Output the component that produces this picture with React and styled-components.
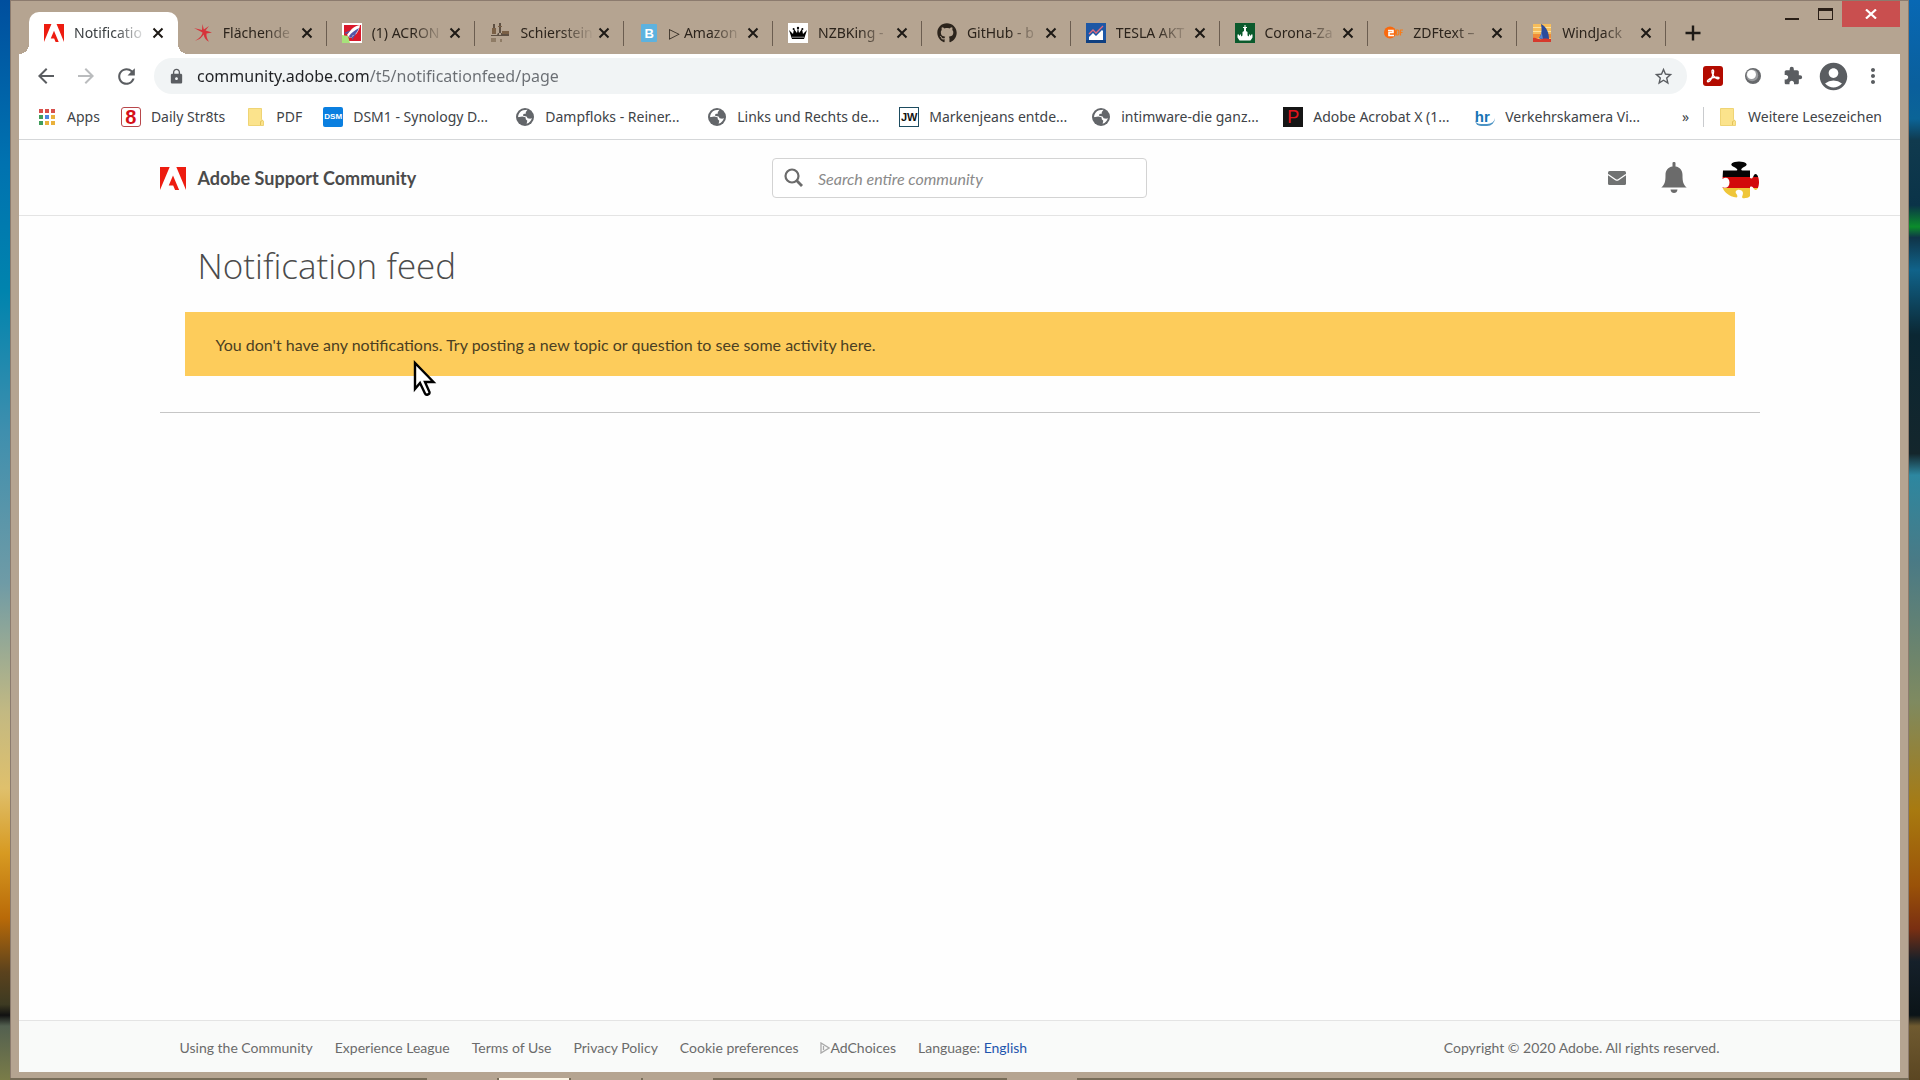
import styled, { createGlobalStyle } from "styled-components";
import { FaGithub } from "react-icons/fa";
import {
  MdAccountCircle,
  MdArrowBack,
  MdArrowForward,
  MdExtension,
  MdLock,
  MdMoreVert,
  MdRefresh,
  MdStarBorder,
} from "react-icons/md";

const GlobalStyle = createGlobalStyle`
  * {
    box-sizing: border-box;
  }
  body {
    margin: 0;
    font-family: "Noto Sans", "Open Sans", sans-serif;
  }
  button {
    padding: 0;
    border: none;
    background: none;
    font: inherit;
    color: inherit;
    cursor: pointer;
  }
  a {
    color: inherit;
    text-decoration: none;
  }
  svg {
    display: block;
    flex-shrink: 0;
  }
`;

/* ---------- desktop and window ---------- */

const Desktop = styled.div`
  display: flex;
  flex-direction: column;
  min-height: 100vh;
  padding: 0 11px 0 10px;
  background:
    linear-gradient(
        #004f9e 0%, #0072b0 15%, #0084ae 27%, #3f8fae 40%, #6f9ba6 54%,
        #c3b982 66%, #dfc06c 73%, #d79a22 79%, #b96a08 85%, #5b421d 90%,
        #3d3a22 93%, #111 94%, #536050 95%, #7a7c48 100%
      ) left / 50% 100% no-repeat,
    linear-gradient(
        #0868b4 0%, #0a5f9c 8%, #0b6497 11%, #103a4e 13%, #0a3348 19%,
        #0b8d2b 21%, #0f3448 22%, #10638a 25%, #0b2733 31%, #14262c 42%,
        #2d87a0 44%, #4a7a85 52%, #7f8a60 65%, #a87a10 75%, #9a5208 82%,
        #7a2f12 86%, #15202a 89%, #0b1418 94%, #6f5a30 95%, #5b4622 100%
      ) right / 50% 100% no-repeat;
`;

const Window = styled.div`
  display: flex;
  flex: 1;
  flex-direction: column;
  padding: 0 8px 6px;
  border: 1px solid #8c7b6e;
  border-width: 1px 1px 0;
  background: #b5a491;
`;

const Taskbar = styled.div`
  display: flex;
  gap: 2px;
  height: 2px;
  padding-left: 417px;
  background: #776c58;
`;

const TaskButton = styled.span`
  width: 70px;
  margin-left: ${(props) => props.$push || 0}px;
  background: ${(props) => props.$color || "#b5a491"};
`;

/* ---------- tab strip ---------- */

const TabStrip = styled.div`
  display: flex;
  height: 53px;
  padding-left: 10px;
`;

const TabList = styled.div`
  display: flex;
  flex: 1;
  align-items: flex-end;
  min-width: 0;
`;

const TabItem = styled.div`
  position: relative;
  display: flex;
  flex: 1 1 0;
  align-items: center;
  gap: 10px;
  min-width: 0;
  height: 42px;
  padding: 0 14px 0 15px;
  color: #2c241c;
  font-size: 14px;

  &::after {
    content: "";
    position: absolute;
    right: 0;
    top: 9px;
    width: 1px;
    height: 25px;
    background: #6b5d50;
  }
`;

const ActiveTab = styled(TabItem)`
  border-radius: 10px 10px 0 0;
  background: #fff;
  color: #3c4043;

  &::before,
  &::after {
    content: "";
    position: absolute;
    top: auto;
    bottom: 0;
    width: 10px;
    height: 10px;
  }
  &::before {
    left: -10px;
    background: radial-gradient(circle at 0 0, transparent 10px, #fff 10px);
  }
  &::after {
    right: -10px;
    background: radial-gradient(circle at 100% 0, transparent 10px, #fff 10px);
  }
`;

const TabTitle = styled.a`
  flex: 1;
  margin-right: -6px;
  overflow: hidden;
  line-height: 20px;
  white-space: nowrap;
  mask-image: linear-gradient(90deg, #000 55%, transparent);
`;

const TabClose = styled.button`
  color: #1e1a16;
`;

const NewTab = styled.button`
  align-self: flex-end;
  width: 56px;
  height: 42px;
  padding-left: 18px;
  color: #1e1a16;
`;

const WindowControls = styled.div`
  display: flex;
  align-items: flex-start;
  margin-left: 54px;
`;

const WindowButton = styled.button`
  display: flex;
  align-items: center;
  justify-content: center;
  width: 33px;
  height: 26px;
  color: #2a1f17;
`;

const CloseWindow = styled(WindowButton)`
  width: 58px;
  background: #c94f4f;
  color: #fff;
`;

/* ---------- toolbar ---------- */

const Toolbar = styled.div`
  display: flex;
  align-items: center;
  height: 44px;
  padding: 0 7px;
  background: #fff;
`;

const ToolButton = styled.button`
  display: flex;
  align-items: center;
  justify-content: center;
  width: 40px;
  height: 36px;
  color: ${(props) => (props.disabled ? "#babcbe" : "#5a5d61")};
`;

const AddressBar = styled.label`
  display: flex;
  flex: 1;
  align-items: center;
  gap: 12px;
  height: 36px;
  margin: 0 6px 0 8px;
  padding: 0 4px 0 14px;
  border-radius: 18px;
  background: #f1f4f5;
  color: #5a5d61;
`;

const AddressInput = styled.input`
  flex: 1;
  min-width: 0;
  padding: 0;
  border: none;
  outline: none;
  font-family: inherit;
  font-size: 16px;
  line-height: 24px;
  color: #5f6368;
  background: linear-gradient(90deg, #202124 173px, #6a6e73 173px);
  background-clip: text;
  -webkit-text-fill-color: transparent;
`;

/* ---------- bookmarks ---------- */

const Bookmarks = styled.nav`
  display: flex;
  align-items: center;
  gap: 21px;
  height: 42px;
  padding: 0 18px 3px 18px;
  border-bottom: 1px solid #d5d7d9;
  background: #fff;
  color: #404347;
  font-size: 14px;
  line-height: 20px;
  white-space: nowrap;
`;

const BookmarkLink = styled.a`
  display: flex;
  align-items: center;
  gap: 10px;
  flex-shrink: 0;
  width: ${(props) => (props.$wide ? "171px" : "auto")};
`;

const BookmarksEnd = styled.div`
  display: flex;
  align-items: center;
  gap: 14px;
  margin-left: auto;
`;

const Divider = styled.span`
  width: 1px;
  height: 20px;
  background: #c9cbce;
`;

const IconTile = styled.span`
  display: flex;
  align-items: center;
  justify-content: center;
  flex-shrink: 0;
  width: ${(props) => props.$box || 20}px;
  height: ${(props) => props.$height || 20}px;
  border: ${(props) => props.$border || "none"};
  border-radius: ${(props) => props.$radius || 0}px;
  background: ${(props) => props.$bg || "transparent"};
  color: ${(props) => props.$color || "#fff"};
  font-family: "Liberation Sans", Arial, sans-serif;
  font-size: ${(props) => props.$size || 10}px;
  font-weight: ${(props) => props.$weight || 700};
  line-height: 1;
`;

const SwooshTile = styled(IconTile)`
  padding-right: 6px;
  border-bottom: 2px solid #4b93c4;
  border-radius: 0 0 8px 6px;
`;

/* ---------- community page ---------- */

const Page = styled.div`
  position: relative;
  display: flex;
  flex: 1;
  flex-direction: column;
  background: #fefefe;
  font-family: Lato, "Open Sans", sans-serif;
  color: #4b4b4b;
`;

const Header = styled.header`
  border-bottom: 1px solid #e4e4e4;
`;

const HeaderInner = styled.div`
  display: grid;
  grid-template-columns: 1fr minmax(0, 375px) 1fr;
  align-items: center;
  max-width: 1600px;
  height: 75px;
  margin: 0 auto;
  padding-top: 1px;
`;

const Brand = styled.a`
  display: flex;
  align-items: center;
  gap: 12px;
  font-size: 18px;
  font-weight: 700;
`;

const SearchBox = styled.label`
  display: flex;
  align-items: center;
  gap: 14px;
  height: 40px;
  padding: 0 11px;
  border: 1px solid #d3d3d3;
  border-radius: 4px;
  background: #fff;
`;

const SearchInput = styled.input`
  flex: 1;
  min-width: 0;
  padding: 0;
  border: none;
  outline: none;
  background: none;
  font-family: inherit;
  font-size: 16px;

  &::placeholder {
    color: #8a8a8a;
    font-style: italic;
    opacity: 1;
  }
`;

const HeaderActions = styled.div`
  display: flex;
  align-items: center;
  justify-content: flex-end;
  gap: 35px;
`;

const Main = styled.main`
  flex: 1;
  width: 100%;
  max-width: 1600px;
  margin: 0 auto;
`;

const Feed = styled.section`
  padding: 26px 25px 36px;
  border-bottom: 1px solid #c6c6c6;
`;

const Heading = styled.h1`
  margin: 0 0 22px;
  padding-left: 13px;
  font-family: "Open Sans", "Noto Sans", sans-serif;
  font-size: 35px;
  font-weight: 300;
  line-height: 48px;
`;

const Notice = styled.p`
  margin: 0;
  padding: 21px 31px 19px;
  background: #fdcc5b;
  color: #4b3f22;
  font-size: 16px;
  line-height: 24px;
`;

const Cursor = styled.svg`
  position: absolute;
  left: 394px;
  top: 220px;
`;

const Footer = styled.footer`
  border-top: 1px solid #e4e4e4;
  background: #f9faf9;
`;

const FooterInner = styled.div`
  display: flex;
  justify-content: space-between;
  max-width: 1600px;
  margin: 0 auto;
  padding: 17px 40px 14px 20px;
  color: #6b6b6b;
  font-size: 14px;
  line-height: 20px;
`;

const FooterLinks = styled.nav`
  display: flex;
  gap: 22px;
`;

const AdLink = styled.a`
  display: flex;
  align-items: center;
`;

const Language = styled.span`
  a {
    color: #1f55ad;
  }
`;

/* ---------- drawings ---------- */

const AdobeLogo = ({ width, height }) => (
  <svg width={width} height={height} viewBox="0 0 25 22" preserveAspectRatio="none">
    <path fill="#ed1c10" d="M0 0h9.3L0 22zM25 0h-9.3L25 22zM12.5 8.1 18.4 22h-3.9l-1.8-4.4H8.4z" />
  </svg>
);

const CloseIcon = () => (
  <svg width="12" height="12" viewBox="0 0 12 12" stroke="currentColor" strokeWidth="2">
    <path d="M1.500 1.500l9 9M10.500 1.500l-9 9" />
  </svg>
);

const BirdIcon = () => (
  <svg width="20" height="20" viewBox="0 0 20 20" fill="#d6323a">
    <path d="M1 5l8 2L9.500 1l1.300 5.500L16 3l-3.500 4.500L19 9.500l-5.500 1c-.3 3 .7 5.300 2.500 8.300-3-1.500-5-4-5.300-7.300-2 3-4.400 5.300-8.700 6.300C5.500 16 9 13 9.500 9.500z" />
  </svg>
);

const RocketIcon = () => (
  <svg width="20" height="20" viewBox="0 0 20 20">
    <path fill="#fff" d="M0 0h20v20H0z" />
    <path fill="#d9182b" d="M2 2h17v16H2z" />
    <path fill="#a7e27a" d="M0 12l6 1 2 7H0z" />
    <path fill="#fff" d="M18 2C12 3 8 7 5 12l3 3c5-2 9-6 10-13z" />
    <path fill="#5356a8" d="M17 5c-4 2-8 5-10 8l1 2c4-2 7-5 9-10zM9 7l-7 3 3 1zM14 11l-4 6v-4z" />
  </svg>
);

const HarbourIcon = () => (
  <svg width="20" height="20" viewBox="0 0 20 20" fill="#5e5043">
    <path d="M3 1h2v10H3zM9 0h2v12H9zM1 13h18v-3H8l-1 2H1z" />
    <path fill="#7a6046" d="M2 5h4v6H2zM8 3h4v1H8zM12 8h7v3h-7z" />
    <path fill="#8f7c66" d="M1 15h5v4H1zM10 16h2v3h-2z" />
  </svg>
);

const CrownIcon = () => (
  <svg width="20" height="20" viewBox="0 0 20 20">
    <path fill="#fff" d="M0 0h20v20H0z" />
    <path d="M1 7l4 4 1-5 3 4 1-5 1 5 3-4 1 5 4-4-3 9H4z" />
    <circle cx="10" cy="5" r="1.2" />
    <circle cx="5.6" cy="6" r="1" />
    <circle cx="14.4" cy="6" r="1" />
    <path stroke="#fff" strokeWidth=".6" d="M4 14.2h12" />
  </svg>
);

const ChartIcon = () => (
  <svg width="20" height="20" viewBox="0 0 20 20">
    <path fill="#1d57a5" d="M0 0h20v20H0z" />
    <path fill="#0f3f80" d="M0 17h20v3H0z" />
    <path fill="#fff" d="M3 17v-3l4-4 3 3 6-6 1 1v9z" />
    <path fill="none" stroke="#e26a7d" strokeWidth="1.3" d="M3 11l4-4 3 3 7-7" />
  </svg>
);

const CastleIcon = () => (
  <svg width="20" height="20" viewBox="0 0 20 20">
    <path fill="#0a5a2c" d="M0 0h20v20H0z" />
    <path
      fill="#fff"
      d="M9.500 2h1v2h1.500v1h-1v3l1.500 1v3.500l1.500 1v-2h1v1h1v-1h1.500v3l-2 3h-11l-2-3v-3H4v1h1v-1h1v2l1.500-1V9L9 8V5H8V4h1.500z"
    />
  </svg>
);

const ZdfIcon = () => (
  <svg width="20" height="20" viewBox="0 0 20 20">
    <circle cx="7" cy="9.500" r="6" fill="#f9690e" />
    <path fill="none" stroke="#fff" strokeWidth="1.6" d="M5 7.500h5v2H6v3h5" />
    <path
      fill="none"
      stroke="#f57c1c"
      strokeWidth="1.2"
      d="M13.500 7v5h1.500l.8-1V8l-.8-1zM17.500 12.500V7H20M17.500 9.500h2"
    />
  </svg>
);

const SailIcon = () => (
  <svg width="20" height="20" viewBox="0 0 20 20">
    <path fill="#f6bd5b" d="M1 1h18v18H1z" />
    <path stroke="#fce3a0" d="M1 4.500h18M1 8.500h18" />
    <path fill="#ef8d3a" d="M1 11h18v4H1z" />
    <path fill="#2b4b9b" d="M9 1c6 3 8 9 8 15l-4 2-6-3c3-4 3-8 2-14z" />
    <path fill="#5b86cf" d="M9 6c1 4 0 7-2 9l4 1z" />
    <path fill="#d6392c" d="M1 15c3-1 5 2 9 1s5 0 9 0v3H1z" />
  </svg>
);

const AppsIcon = () => {
  const colors = ["#d8504c", "#d8504c", "#d8504c", "#3f9d5b", "#4a86e0", "#eab13c", "#3f9d5b", "#eab13c", "#eab13c"];
  return (
    <svg width="20" height="20" viewBox="0 0 20 20">
      {colors.map((color, i) => (
        <rect key={i} x={2 + (i % 3) * 6} y={2 + Math.floor(i / 3) * 6} width="4" height="4" fill={color} />
      ))}
    </svg>
  );
};

const FolderIcon = () => (
  <svg width="20" height="20" viewBox="0 0 20 20">
    <path fill="#fbe38c" stroke="#efd475" d="M2.500 1.500h13v11l2 1.500v4.500h-15z" />
    <path fill="none" stroke="#e3c35c" d="M14.500 18v-3.500l2-1" />
  </svg>
);

const GlobeIcon = () => (
  <svg width="20" height="20" viewBox="0 0 20 20">
    <circle cx="10" cy="10" r="9" fill="#63666a" />
    <path
      fill="#fff"
      d="M8 3.200l4.500-.4-1.800 2.400.3 1.300-2.600.4-.4 1.900 3.600.6 1 1.800 2.600.5 1.600-.7c-.4 2.700-2.500 5-5.200 5.800l.7-3-1.500-1.500-.3-2-3.300-.8L3 10.200C3 7 5 4.300 8 3.200z"
    />
    <path fill="#63666a" d="M3 10l3.500 1.500 1.500 3 .5 3-4-2z" />
  </svg>
);

const AcrobatIcon = () => (
  <svg width="22" height="22" viewBox="0 0 22 22">
    <rect x="1" y="1" width="20" height="20" rx="3" fill="#b30b00" />
    <path
      fill="none"
      stroke="#fff"
      strokeWidth="1.4"
      d="M10.500 5c1.500-.6 1.300 2.500.2 5.500-1.200 3.300-3.300 6.300-4.700 6.200-1.800-.4.800-2.900 4.500-3.900 3.600-1 6.700-.8 6.500.4-.3 1.300-3.400.1-5.200-2-1.700-2-2.500-5.700-1.300-6.200z"
    />
  </svg>
);

const OrbIcon = () => (
  <svg width="18" height="18" viewBox="0 0 18 18">
    <circle cx="9" cy="9" r="8" fill="#66686b" />
    <circle cx="8.200" cy="8.200" r="6" fill="#999b9e" />
    <circle cx="7.500" cy="7.500" r="4.500" fill="#fff" />
  </svg>
);

const SearchIcon = () => (
  <svg width="20" height="20" viewBox="0 0 20 20" fill="none" stroke="#6b6b6b">
    <circle cx="8" cy="8" r="6.500" strokeWidth="2.200" />
    <path strokeWidth="2.800" d="M12.600 12.600l5.400 5.400" />
  </svg>
);

const MailIcon = () => (
  <svg width="18" height="14" viewBox="0 0 18 14">
    <rect width="18" height="14" rx="1.500" fill="#707272" />
    <path fill="none" stroke="#fff" strokeWidth="1.300" d="M0 3.500l7.600 5.200c.9.600 1.900.6 2.800 0L18 3.500" />
  </svg>
);

const BellIcon = () => (
  <svg width="26" height="32" viewBox="0 0 26 32" fill="#6b6b6b">
    <path d="M11.500 1c0-1.300 3-1.300 3 0v3.500c4.500.6 7 3.800 7 8.500 0 7 .8 9.500 4.200 12.500H.3C3.700 22.500 4.500 20 4.500 13c0-4.700 2.500-7.900 7-8.500z" />
    <path d="M9.500 27.500h7c-.3 4.700-6.700 4.700-7 0z" />
  </svg>
);

const AvatarIcon = () => (
  <svg width="38" height="42" viewBox="0 -4 38 42">
    <defs>
      <clipPath id="piece">
        <path d="M1 9.500h12.500c3.500 0 1.500-2-1.500-3.500C6 3.500 11 .5 17 .5s11 3 5 5.500c-3 1.500-4 3.500-.5 3.500H28V17c2.500 1.500 3-1 4-3 2-3 5 1 5 7s-2.500 10-5 7c-1-2-2-3-4-2v9c-1 2-6 2.500-7.500 2-1.500-1.500 2.500-5-1-7.500-4-2-7.500 1-5 3.500.8 1 1.500 3 0 3.500C7 36 1 30 .5 26c3 2 7 .5 7-4.500s-4-6-7-3.500z" />
      </clipPath>
    </defs>
    <g clipPath="url(#piece)">
      <path fill="#050505" d="M0 0h38v16H0z" />
      <path fill="#d20a0a" d="M0 16h38v11H0z" />
      <path fill="#efc63a" d="M0 27h38v11H0z" />
    </g>
  </svg>
);

/* ---------- data ---------- */

const tabs = [
  { title: "Notificatio", icon: <AdobeLogo width={20} height={18} /> },
  { title: "Flächende", icon: <BirdIcon /> },
  { title: "(1) ACRON", icon: <RocketIcon /> },
  { title: "Schierstein", icon: <HarbourIcon /> },
  {
    title: "▷ Amazon",
    icon: (
      <IconTile>
        <IconTile $bg="#5db2df" $box={16} $height={18} $radius={1} $size={13}>
          B
        </IconTile>
      </IconTile>
    ),
  },
  { title: "NZBKing -", icon: <CrownIcon /> },
  { title: "GitHub - b", icon: <FaGithub size={20} /> },
  { title: "TESLA AKT", icon: <ChartIcon /> },
  { title: "Corona-Za", icon: <CastleIcon /> },
  { title: "ZDFtext –", icon: <ZdfIcon /> },
  { title: "WindJack", icon: <SailIcon /> },
];

const bookmarks = [
  { label: "Apps", icon: <AppsIcon /> },
  {
    label: "Daily Str8ts",
    icon: (
      <IconTile $border="1px solid #b8474b" $radius={3} $color="#d50f19" $size={20}>
        8
      </IconTile>
    ),
  },
  { label: "PDF", icon: <FolderIcon /> },
  {
    label: "DSM1 - Synology D...",
    wide: true,
    icon: (
      <IconTile $bg="#0a7fe0" $radius={2} $size={8}>
        DSM
      </IconTile>
    ),
  },
  { label: "Dampfloks - Reiner...", wide: true, icon: <GlobeIcon /> },
  { label: "Links und Rechts de...", wide: true, icon: <GlobeIcon /> },
  {
    label: "Markenjeans entde...",
    wide: true,
    icon: (
      <IconTile $border="1px solid #1d4c60" $color="#111" $size={11}>
        JW
      </IconTile>
    ),
  },
  { label: "intimware-die ganz...", wide: true, icon: <GlobeIcon /> },
  {
    label: "Adobe Acrobat X (1...",
    wide: true,
    icon: (
      <IconTile $bg="#151515" $color="#e3141c" $size={18} $weight={400}>
        P
      </IconTile>
    ),
  },
  {
    label: "Verkehrskamera Vi...",
    wide: true,
    icon: (
      <SwooshTile $color="#1673b4" $size={15} $height={18}>
        hr
      </SwooshTile>
    ),
  },
];

const footerLinks = [
  "Using the Community",
  "Experience League",
  "Terms of Use",
  "Privacy Policy",
  "Cookie preferences",
];

/* ---------- components ---------- */

const Tab = ({ title, icon, active }) => {
  const Item = active ? ActiveTab : TabItem;
  return (
    <Item>
      {icon}
      <TabTitle href="#">{title}</TabTitle>
      <TabClose aria-label="Close tab">
        <CloseIcon />
      </TabClose>
    </Item>
  );
};

const Bookmark = ({ label, icon, wide }) => (
  <BookmarkLink href="#" $wide={wide}>
    {icon}
    <span>{label}</span>
  </BookmarkLink>
);

const BrowserTop = () => (
  <>
    <TabStrip>
      <TabList>
        {tabs.map((tab, i) => (
          <Tab key={tab.title} {...tab} active={i === 0} />
        ))}
      </TabList>
      <NewTab aria-label="New tab">
        <svg width="18" height="18" viewBox="0 0 18 18" stroke="currentColor" strokeWidth="2.400">
          <path d="M9 1.500v15M1.500 9h15" />
        </svg>
      </NewTab>
      <WindowControls>
        <WindowButton aria-label="Minimize">
          <svg width="15" height="26" viewBox="0 0 15 26">
            <path fill="currentColor" d="M0 17h14v2H0z" />
          </svg>
        </WindowButton>
        <WindowButton aria-label="Maximize">
          <svg width="15" height="12" viewBox="0 0 15 12">
            <path fill="currentColor" fillRule="evenodd" d="M0 0h15v12H0zM1 3v8h13V3z" />
          </svg>
        </WindowButton>
        <CloseWindow aria-label="Close">
          <svg width="12" height="10" viewBox="0 0 12 10" stroke="currentColor" strokeWidth="2.200">
            <path d="M1 .5l10 9M11 .5l-10 9" />
          </svg>
        </CloseWindow>
      </WindowControls>
    </TabStrip>
    <Toolbar>
      <ToolButton aria-label="Back">
        <MdArrowBack size={24} />
      </ToolButton>
      <ToolButton aria-label="Forward" disabled>
        <MdArrowForward size={24} />
      </ToolButton>
      <ToolButton aria-label="Reload">
        <MdRefresh size={25} />
      </ToolButton>
      <AddressBar>
        <MdLock size={17} />
        <AddressInput
          aria-label="Address"
          defaultValue="community.adobe.com/t5/notificationfeed/page"
        />
        <ToolButton aria-label="Bookmark this page">
          <MdStarBorder size={21} />
        </ToolButton>
      </AddressBar>
      <ToolButton aria-label="Adobe Acrobat">
        <AcrobatIcon />
      </ToolButton>
      <ToolButton aria-label="Extension">
        <OrbIcon />
      </ToolButton>
      <ToolButton aria-label="Extensions">
        <MdExtension size={20} />
      </ToolButton>
      <ToolButton aria-label="Profile">
        <MdAccountCircle size={33} />
      </ToolButton>
      <ToolButton aria-label="Menu">
        <MdMoreVert size={24} />
      </ToolButton>
    </Toolbar>
    <Bookmarks>
      {bookmarks.map((bookmark) => (
        <Bookmark key={bookmark.label} {...bookmark} />
      ))}
      <BookmarksEnd>
        <button aria-label="More bookmarks">»</button>
        <Divider />
        <Bookmark label="Weitere Lesezeichen" icon={<FolderIcon />} />
      </BookmarksEnd>
    </Bookmarks>
  </>
);

const CommunityPage = () => (
  <Page>
    <Header>
      <HeaderInner>
        <Brand href="#">
          <AdobeLogo width={26} height={23} />
          Adobe Support Community
        </Brand>
        <SearchBox>
          <SearchIcon />
          <SearchInput aria-label="Search" placeholder="Search entire community" />
        </SearchBox>
        <HeaderActions>
          <button aria-label="Messages">
            <MailIcon />
          </button>
          <button aria-label="Notifications">
            <BellIcon />
          </button>
          <button aria-label="Profile">
            <AvatarIcon />
          </button>
        </HeaderActions>
      </HeaderInner>
    </Header>
    <Main>
      <Feed>
        <Heading>Notification feed</Heading>
        <Notice>
          You don't have any notifications. Try posting a new topic or question to see some
          activity here.
        </Notice>
      </Feed>
    </Main>
    <Footer>
      <FooterInner>
        <FooterLinks>
          {footerLinks.map((link) => (
            <a key={link} href="#">
              {link}
            </a>
          ))}
          <AdLink href="#">
            <svg width="10" height="12" viewBox="0 0 10 12" fill="none" stroke="#a9a9a9">
              <path strokeWidth="1.300" d="M1 1v10l8-5zM3.500 4v4" />
            </svg>
            AdChoices
          </AdLink>
          <Language>
            Language: <a href="#">English</a>
          </Language>
        </FooterLinks>
        <span>Copyright © 2020 Adobe. All rights reserved.</span>
      </FooterInner>
    </Footer>
    <Cursor width="24" height="38" viewBox="0 0 24 38">
      <path
        fill="#fff"
        stroke="#000"
        strokeWidth="2.400"
        d="M2 3v26l5-6 5 10.500c1 2.200 5 1 4.500-1.500L12 22h8.500z"
      />
    </Cursor>
  </Page>
);

const App = () => {
  return (
    <Desktop>
      <GlobalStyle />
      <Window>
        <BrowserTop />
        <CommunityPage />
      </Window>
      <Taskbar>
        <TaskButton />
        <TaskButton $color="#fbf3e4" />
        <TaskButton />
        <TaskButton />
        <TaskButton $push={292} />
      </Taskbar>
    </Desktop>
  );
};

export default App;
